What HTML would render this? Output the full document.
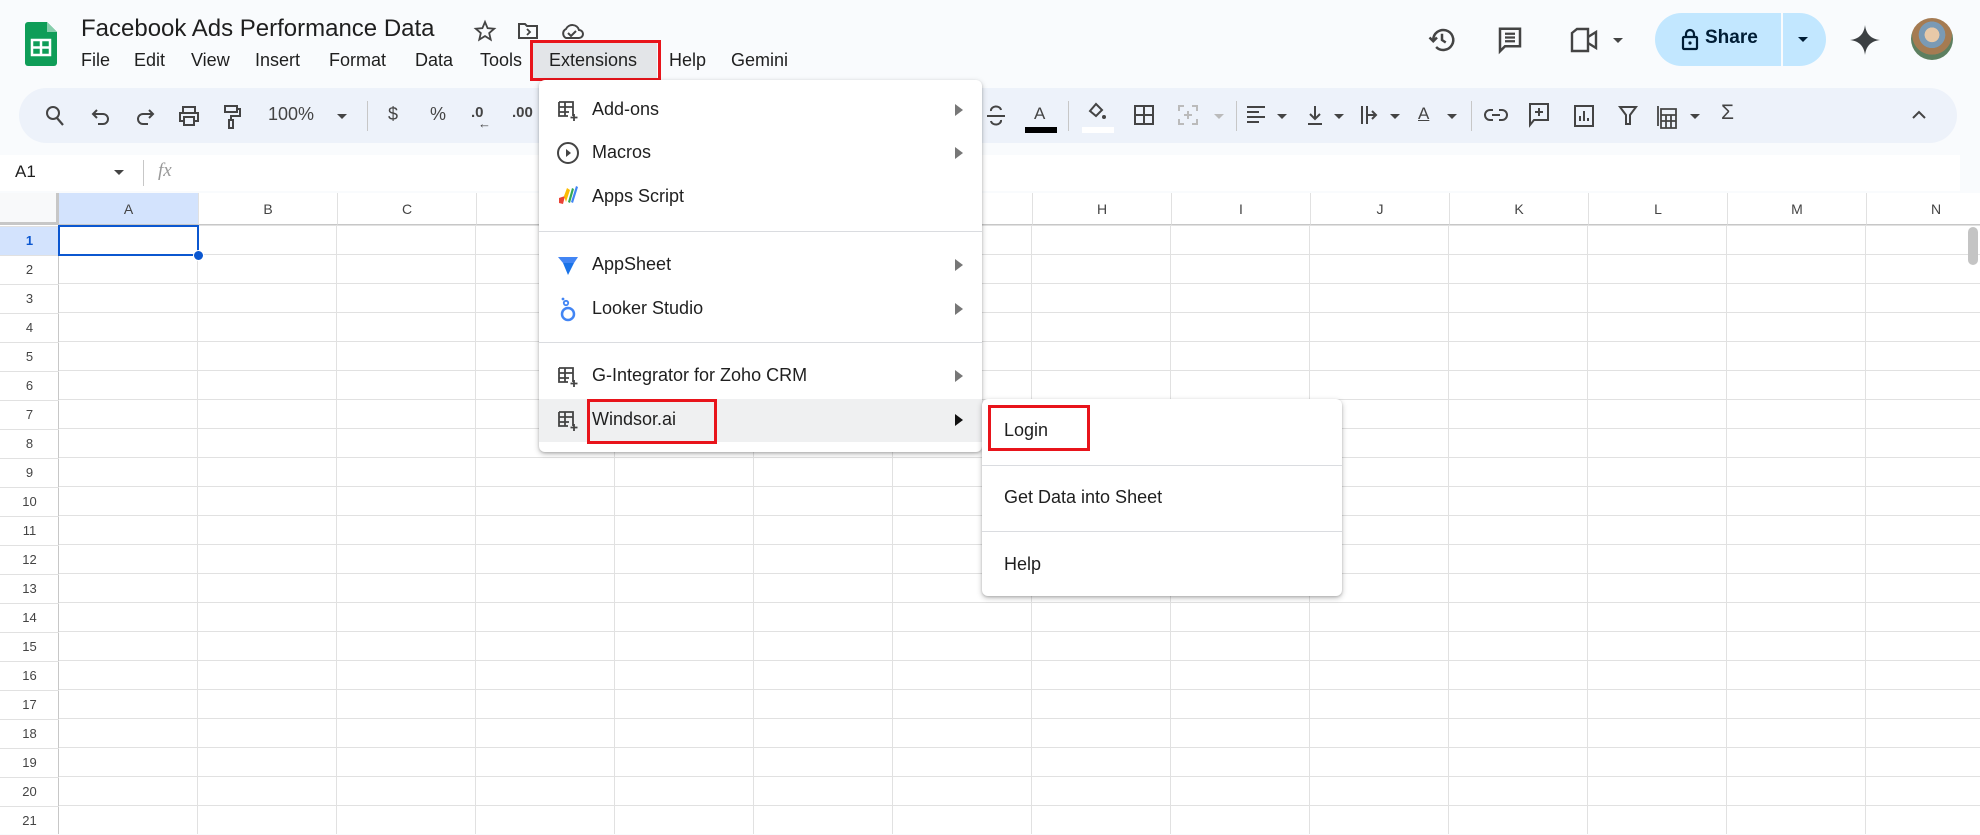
<!DOCTYPE html>
<html><head><meta charset="utf-8"><style>
*{margin:0;padding:0;box-sizing:border-box}
body{width:1980px;height:834px;overflow:hidden;background:#f9fbfd;font-family:"Liberation Sans",Arial,sans-serif;color:#1f1f1f;position:relative}
.a{position:absolute}
.title{left:81px;top:15px;font-size:24px;color:#1f1f1f}
.menu{top:50px;font-size:18px;color:#1f1f1f}
.tb{left:19px;top:88px;width:1938px;height:55px;border-radius:28px;background:#edf2fa}
.ic{position:absolute;top:104px}
.fx{left:0;top:155px;width:1960px;height:36px;background:#fff}
.grid{left:0;top:193px;width:1980px;height:641px;background:#fff;
background-image:linear-gradient(to right,#e1e1e1 1px,transparent 1px),linear-gradient(to bottom,#e1e1e1 1px,transparent 1px);
background-size:139px 29px;background-position:58px 32px}
.colh{top:193px;height:32px;border-bottom:1px solid #c7c7c7;font-size:14px;color:#444;text-align:center;line-height:32px;width:139px}
.rowh{left:0;width:59px;height:29px;font-size:13px;color:#444;text-align:center;line-height:29px}
.dd{background:#fff;border-radius:6px;box-shadow:0 2px 6px rgba(0,0,0,.25),0 1px 2px rgba(0,0,0,.15)}
.mi{position:absolute;left:53px;font-size:18px;color:#1f1f1f}
.arr{position:absolute;left:416px;width:0;height:0;border-top:6px solid transparent;border-bottom:6px solid transparent;border-left:8px solid #777}
.sep{position:absolute;left:0;height:1px;background:#dadce0}
.red{position:absolute;border:3px solid #e8141b}
.tt{position:absolute;font-size:18px;color:#444;top:104px}
.vs{position:absolute;top:101px;width:1px;height:30px;background:#c7c7c7}
.dn{position:absolute;width:0;height:0;border-left:5px solid transparent;border-right:5px solid transparent;border-top:5px solid #444;top:114px}
</style></head><body>

<svg class="a" style="left:25px;top:22px" width="32" height="44" viewBox="0 0 32 44"><path d="M3 0h19l10 10v31a3 3 0 0 1-3 3H3a3 3 0 0 1-3-3V3a3 3 0 0 1 3-3z" fill="#0f9d58"/><path d="M22 0v10h10z" fill="#87ceac"/><rect x="7" y="18" width="18" height="15" fill="none" stroke="#fff" stroke-width="2.5"/><path d="M7 25.5h18M16 18v15" stroke="#fff" stroke-width="2.5"/></svg>
<div class="a title">Facebook Ads Performance Data</div>
<svg class="a" style="left:473px;top:19px" width="24" height="24" viewBox="0 0 24 24"><path d="M12 3l2.6 6.2 6.6.5-5 4.4 1.5 6.5L12 17.1l-5.7 3.5 1.5-6.5-5-4.4 6.6-.5z" fill="none" stroke="#444" stroke-width="1.8"/></svg>
<svg class="a" style="left:516px;top:19px" width="24" height="24" viewBox="0 0 24 24"><path d="M3 5h6l2 2h10v12H3z" fill="none" stroke="#444" stroke-width="2"/><path d="M11 10l3 3-3 3" fill="none" stroke="#444" stroke-width="1.8"/></svg>
<svg class="a" style="left:559px;top:19px" width="26" height="24" viewBox="0 0 26 24"><path d="M7 19h13a4 4 0 0 0 0-8 7 7 0 0 0-13-1 5 5 0 0 0 0 9z" fill="none" stroke="#444" stroke-width="2"/><path d="M9 14l3 3 5-5" fill="none" stroke="#444" stroke-width="2"/></svg>

<div class="a menu" style="left:81px">File</div>
<div class="a menu" style="left:134px">Edit</div>
<div class="a menu" style="left:191px">View</div>
<div class="a menu" style="left:255px">Insert</div>
<div class="a menu" style="left:329px">Format</div>
<div class="a menu" style="left:415px">Data</div>
<div class="a menu" style="left:480px">Tools</div>
<div class="a" style="left:533px;top:43px;width:124px;height:35px;background:#e3e5e8"></div>
<div class="a menu" style="left:549px">Extensions</div>
<div class="red" style="left:530px;top:40px;width:131px;height:41px"></div>
<div class="a menu" style="left:669px">Help</div>
<div class="a menu" style="left:731px">Gemini</div>

<svg class="a" style="left:1427px;top:25px" width="30" height="30" viewBox="0 0 24 24"><path d="M5 12a8 8 0 1 1 2.3 5.6" fill="none" stroke="#444" stroke-width="2"/><path d="M2 10l3 3 3-3" fill="none" stroke="#444" stroke-width="2"/><path d="M12 7v5l3 2" fill="none" stroke="#444" stroke-width="2"/></svg>
<svg class="a" style="left:1495px;top:25px" width="30" height="30" viewBox="0 0 24 24"><path d="M4 3h16v14H8l-4 4z" fill="none" stroke="#444" stroke-width="2"/><path d="M8 7h8M8 10h8M8 13h8" stroke="#444" stroke-width="1.8"/></svg>
<svg class="a" style="left:1570px;top:27px" width="30" height="26" viewBox="0 0 30 26"><path d="M2 6l5-4h11v22H2z" fill="none" stroke="#444" stroke-width="2.4"/><path d="M18 10l8-5v16l-8-5" fill="none" stroke="#444" stroke-width="2.4"/></svg>
<div class="dn" style="left:1613px;top:38px"></div>
<div class="a" style="left:1655px;top:13px;width:171px;height:53px;border-radius:27px;background:#c2e7ff"></div>
<div class="a" style="left:1781px;top:13px;width:2px;height:53px;background:#f9fbfd"></div>
<svg class="a" style="left:1681px;top:27px" width="18" height="24" viewBox="0 0 18 24"><rect x="2" y="10" width="14" height="12" rx="1" fill="none" stroke="#001d35" stroke-width="2.2"/><path d="M5 10V7a4 4 0 0 1 8 0v3" fill="none" stroke="#001d35" stroke-width="2.2"/><circle cx="9" cy="16" r="1.6" fill="#001d35"/></svg>
<div class="a" style="left:1705px;top:27px;font-size:19px;font-weight:bold;color:#001d35">Share</div>
<div class="dn" style="left:1798px;top:37px;border-top-color:#001d35"></div>
<svg class="a" style="left:1849px;top:24px" width="32" height="32" viewBox="0 0 32 32"><path d="M16 1C17 10 22 15 31 16 22 17 17 22 16 31 15 22 10 17 1 16 10 15 15 10 16 1z" fill="#3c4043"/></svg>
<div class="a" style="left:1911px;top:18px;width:42px;height:42px;border-radius:50%;background:radial-gradient(circle at 50% 40%,#e8c9a8 0 22%,#7a9ab5 23% 40%,#a57b52 41% 60%,#5d7f60 61%)"></div>

<div class="a tb"></div>
<svg class="ic" style="left:44px" width="22" height="24" viewBox="0 0 22 24"><circle cx="9" cy="9" r="6" fill="none" stroke="#444" stroke-width="2"/><path d="M13 14l6 7" stroke="#444" stroke-width="2.2"/></svg>
<svg class="ic" style="left:91px" width="20" height="24" viewBox="0 0 20 24"><path d="M6 6L2 10l4 4M2 10h10a5 5 0 0 1 0 10H7" fill="none" stroke="#444" stroke-width="2"/></svg>
<svg class="ic" style="left:135px" width="20" height="24" viewBox="0 0 20 24"><path d="M14 6l4 4-4 4M18 10H8a5 5 0 0 0 0 10h5" fill="none" stroke="#444" stroke-width="2"/></svg>
<svg class="ic" style="left:177px" width="24" height="24" viewBox="0 0 24 24"><path d="M6 8V3h12v5M6 17H3V9h18v8h-3M7 13h10v8H7z" fill="none" stroke="#444" stroke-width="2"/></svg>
<svg class="ic" style="left:222px" width="20" height="26" viewBox="0 0 20 26"><path d="M3 2h12v6H3zM15 5h3v7H9v4M7 16h4v8H7z" fill="none" stroke="#444" stroke-width="2"/></svg>
<div class="tt" style="left:268px">100%</div>
<div class="dn" style="left:337px"></div>
<div class="vs" style="left:367px"></div>
<div class="tt" style="left:388px">$</div>
<div class="tt" style="left:430px">%</div>
<div class="tt" style="left:471px;font-size:15px;font-weight:bold">.0</div><div class="tt" style="left:478px;top:116px;font-size:13px">←</div>
<div class="tt" style="left:512px;font-size:15px;font-weight:bold">.00</div>

<svg class="ic" style="left:985px" width="22" height="24" viewBox="0 0 22 24"><path d="M16 6a5 4 0 0 0-10 1M6 17a5 4 0 0 0 10-1M2 12h18" fill="none" stroke="#444" stroke-width="2"/></svg>
<div class="tt" style="left:1034px;font-size:17px">A</div><div class="a" style="left:1025px;top:127px;width:32px;height:6px;background:#000"></div>
<div class="vs" style="left:1068px"></div>
<svg class="ic" style="left:1086px;top:99px" width="22" height="24" viewBox="0 0 22 24"><path d="M4 12l6-7 6 6-6 6z" fill="none" stroke="#444" stroke-width="2"/><circle cx="18" cy="18" r="2" fill="#444"/></svg>
<div class="a" style="left:1082px;top:127px;width:32px;height:6px;background:#fff"></div>
<svg class="ic" style="left:1133px" width="22" height="22" viewBox="0 0 22 22"><path d="M2 2h18v18H2zM11 2v18M2 11h18" fill="none" stroke="#444" stroke-width="2"/></svg>
<svg class="ic" style="left:1177px" width="22" height="22" viewBox="0 0 22 22"><path d="M2 7V2h5M15 2h5v5M2 15v5h5M15 20h5v-5M7 11h8M11 7v8" fill="none" stroke="#bbb" stroke-width="2"/></svg>
<div class="dn" style="left:1214px;border-top-color:#bbb"></div>
<div class="vs" style="left:1236px"></div>
<svg class="ic" style="left:1245px" width="22" height="22" viewBox="0 0 22 22"><path d="M2 3h18M2 8h12M2 13h18M2 18h12" stroke="#444" stroke-width="2"/></svg>
<div class="dn" style="left:1277px"></div>
<svg class="ic" style="left:1305px" width="20" height="22" viewBox="0 0 20 22"><path d="M10 2v13M5 10l5 5 5-5M3 20h14" fill="none" stroke="#444" stroke-width="2"/></svg>
<div class="dn" style="left:1334px"></div>
<svg class="ic" style="left:1359px" width="20" height="22" viewBox="0 0 20 22"><path d="M3 2v18M8 2v18M8 11h9M13 7l4 4-4 4" fill="none" stroke="#444" stroke-width="2"/></svg>
<div class="dn" style="left:1390px"></div>
<div class="tt" style="left:1418px;font-size:17px;text-decoration:underline">A</div>
<div class="dn" style="left:1447px"></div>
<div class="vs" style="left:1471px"></div>
<svg class="ic" style="left:1484px" width="24" height="22" viewBox="0 0 24 22"><path d="M9 6H6a5 5 0 0 0 0 10h3M15 6h3a5 5 0 0 1 0 10h-3M8 11h8" fill="none" stroke="#444" stroke-width="2"/></svg>
<svg class="ic" style="left:1528px;top:102px" width="22" height="26" viewBox="0 0 22 26"><path d="M2 2h18v16H6l-4 5zM11 6v8M7 10h8" fill="none" stroke="#444" stroke-width="2"/></svg>
<svg class="ic" style="left:1573px" width="22" height="24" viewBox="0 0 22 24"><path d="M2 2h18v20H2zM7 17v-5M11 17V7M15 17v-3" fill="none" stroke="#444" stroke-width="2"/></svg>
<svg class="ic" style="left:1618px" width="20" height="22" viewBox="0 0 20 22"><path d="M2 3h16l-6 8v9h-4v-9z" fill="none" stroke="#444" stroke-width="2"/></svg>
<svg class="ic" style="left:1656px" width="22" height="26" viewBox="0 0 22 26"><path d="M2 2v20M5 5h15v19H5zM5 11h15M5 17h15M10 11v13M15 11v13" fill="none" stroke="#444" stroke-width="1.8"/></svg>
<div class="dn" style="left:1690px"></div>
<div class="tt" style="left:1721px;font-size:21px;top:101px">Σ</div>
<svg class="ic" style="left:1910px;top:108px" width="18" height="14" viewBox="0 0 18 14"><path d="M3 10l6-6 6 6" fill="none" stroke="#444" stroke-width="2"/></svg>

<div class="a fx"></div>
<div class="a" style="left:15px;top:162px;font-size:17px">A1</div>
<div class="dn" style="left:114px;top:170px"></div>
<div class="a" style="left:143px;top:160px;width:1px;height:26px;background:#c7c7c7"></div>
<div class="a" style="left:158px;top:160px;font-size:19px;font-style:italic;color:#999;font-family:'Liberation Serif',serif">fx</div>

<div class="a grid"></div>
<div class="a" style="left:0;top:193px;width:1980px;height:32px;background:#fff;border-bottom:1px solid #c7c7c7"></div>
<div class="a" style="left:0;top:193px;width:59px;height:641px;background:#fff;border-right:1px solid #c7c7c7"></div>
<div class="a" style="left:0;top:193px;width:59px;height:32px;background:#f8f9fa;border-right:3px solid #c7c7c7;border-bottom:3px solid #c7c7c7"></div>
<div class="a" style="left:59px;top:193px;width:139px;height:32px;background:#d3e3fd"></div>
<div class="a" style="left:0;top:226px;width:59px;height:29px;background:#d3e3fd"></div>

<div class="a colh" style="left:59px">A</div><div class="a colh" style="left:198px;border-left:1px solid #e1e1e1">B</div><div class="a colh" style="left:337px;border-left:1px solid #e1e1e1">C</div><div class="a colh" style="left:476px;border-left:1px solid #e1e1e1">D</div><div class="a colh" style="left:615px;border-left:1px solid #e1e1e1">E</div><div class="a colh" style="left:754px;border-left:1px solid #e1e1e1">F</div><div class="a colh" style="left:893px;border-left:1px solid #e1e1e1">G</div><div class="a colh" style="left:1032px;border-left:1px solid #e1e1e1">H</div><div class="a colh" style="left:1171px;border-left:1px solid #e1e1e1">I</div><div class="a colh" style="left:1310px;border-left:1px solid #e1e1e1">J</div><div class="a colh" style="left:1449px;border-left:1px solid #e1e1e1">K</div><div class="a colh" style="left:1588px;border-left:1px solid #e1e1e1">L</div><div class="a colh" style="left:1727px;border-left:1px solid #e1e1e1">M</div><div class="a colh" style="left:1866px;border-left:1px solid #e1e1e1">N</div>

<div class="a rowh" style="top:226px;font-weight:bold;color:#0b57d0">1</div>
<div class="a rowh" style="top:255px">2</div><div class="a rowh" style="top:284px">3</div><div class="a rowh" style="top:313px">4</div><div class="a rowh" style="top:342px">5</div><div class="a rowh" style="top:371px">6</div><div class="a rowh" style="top:400px">7</div><div class="a rowh" style="top:429px">8</div><div class="a rowh" style="top:458px">9</div><div class="a rowh" style="top:487px">10</div><div class="a rowh" style="top:516px">11</div><div class="a rowh" style="top:545px">12</div><div class="a rowh" style="top:574px">13</div><div class="a rowh" style="top:603px">14</div><div class="a rowh" style="top:632px">15</div><div class="a rowh" style="top:661px">16</div><div class="a rowh" style="top:690px">17</div><div class="a rowh" style="top:719px">18</div><div class="a rowh" style="top:748px">19</div><div class="a rowh" style="top:777px">20</div><div class="a rowh" style="top:806px">21</div>
<div class="a" style="left:0;top:226px;width:59px;height:608px;background-image:linear-gradient(to bottom,#e1e1e1 1px,transparent 1px);background-size:59px 29px"></div>

<div class="a" style="left:58px;top:225px;width:141px;height:31px;border:2px solid #0b57d0"></div>
<div class="a" style="left:193px;top:250px;width:11px;height:11px;border-radius:50%;background:#0b57d0;border:1px solid #fff"></div>
<div class="a" style="left:1968px;top:227px;width:10px;height:38px;border-radius:5px;background:#c4c4c4"></div>

<div class="a dd" style="left:539px;top:80px;width:443px;height:372px">
 <svg class="a" style="left:18px;top:20px" width="22" height="22" viewBox="0 0 22 22"><path d="M2 2h14v14M2 2v14h9M2 7h14M2 12h10M8 2v14M17 14v7M13.5 17.5h7" fill="none" stroke="#444" stroke-width="1.8"/></svg>
 <div class="mi" style="top:19px">Add-ons</div><div class="arr" style="top:24px"></div>
 <svg class="a" style="left:17px;top:61px" width="24" height="24" viewBox="0 0 24 24"><circle cx="12" cy="12" r="10" fill="none" stroke="#444" stroke-width="2"/><path d="M10 8v8l5-4z" fill="#444"/></svg>
 <div class="mi" style="top:62px">Macros</div><div class="arr" style="top:67px"></div>
 <svg class="a" style="left:18px;top:104px" width="22" height="22" viewBox="0 0 22 22"><path d="M2 14l6-2-2 8-4-1z" fill="#ea4335"/><path d="M7 12l3-8 3 2-4 12z" fill="#fbbc04"/><path d="M11 18l4-14 2 1-4 14z" fill="#34a853"/><path d="M14 18l5-16 2 1-5 16z" fill="#4285f4"/></svg>
 <div class="mi" style="top:106px">Apps Script</div>
 <div class="sep" style="top:151px;width:443px"></div>
 <svg class="a" style="left:18px;top:175px" width="22" height="22" viewBox="0 0 22 22"><path d="M1 2h20l-4 6H6z" fill="#4285f4"/><path d="M6 8h11l-6 12z" fill="#1a73e8"/></svg>
 <div class="mi" style="top:174px">AppSheet</div><div class="arr" style="top:179px"></div>
 <svg class="a" style="left:20px;top:217px" width="18" height="26" viewBox="0 0 18 26"><circle cx="9" cy="17" r="6" fill="none" stroke="#4285f4" stroke-width="2.5"/><circle cx="7" cy="6" r="2.2" fill="none" stroke="#4285f4" stroke-width="1.8"/><circle cx="4" cy="2" r="1.4" fill="#4285f4"/></svg>
 <div class="mi" style="top:218px">Looker Studio</div><div class="arr" style="top:223px"></div>
 <div class="sep" style="top:262px;width:443px"></div>
 <svg class="a" style="left:18px;top:286px" width="22" height="22" viewBox="0 0 22 22"><path d="M2 2h14v14M2 2v14h9M2 7h14M2 12h10M8 2v14M17 14v7M13.5 17.5h7" fill="none" stroke="#444" stroke-width="1.8"/></svg>
 <div class="mi" style="top:285px">G-Integrator for Zoho CRM</div><div class="arr" style="top:290px"></div>
 <div class="a" style="left:0;top:319px;width:443px;height:43px;background:#eff0f1"></div>
 <svg class="a" style="left:18px;top:330px" width="22" height="22" viewBox="0 0 22 22"><path d="M2 2h14v14M2 2v14h9M2 7h14M2 12h10M8 2v14M17 14v7M13.5 17.5h7" fill="none" stroke="#444" stroke-width="1.8"/></svg>
 <div class="mi" style="top:329px">Windsor.ai</div><div class="arr" style="top:334px;border-left-color:#111"></div>
</div>
<div class="red" style="left:587px;top:399px;width:130px;height:45px"></div>

<div class="a dd" style="left:982px;top:399px;width:360px;height:197px">
 <div class="mi" style="left:22px;top:21px">Login</div>
 <div class="sep" style="top:66px;width:360px"></div>
 <div class="mi" style="left:22px;top:88px">Get Data into Sheet</div>
 <div class="sep" style="top:132px;width:360px"></div>
 <div class="mi" style="left:22px;top:155px">Help</div>
</div>
<div class="red" style="left:988px;top:405px;width:102px;height:46px"></div>
</body></html>
